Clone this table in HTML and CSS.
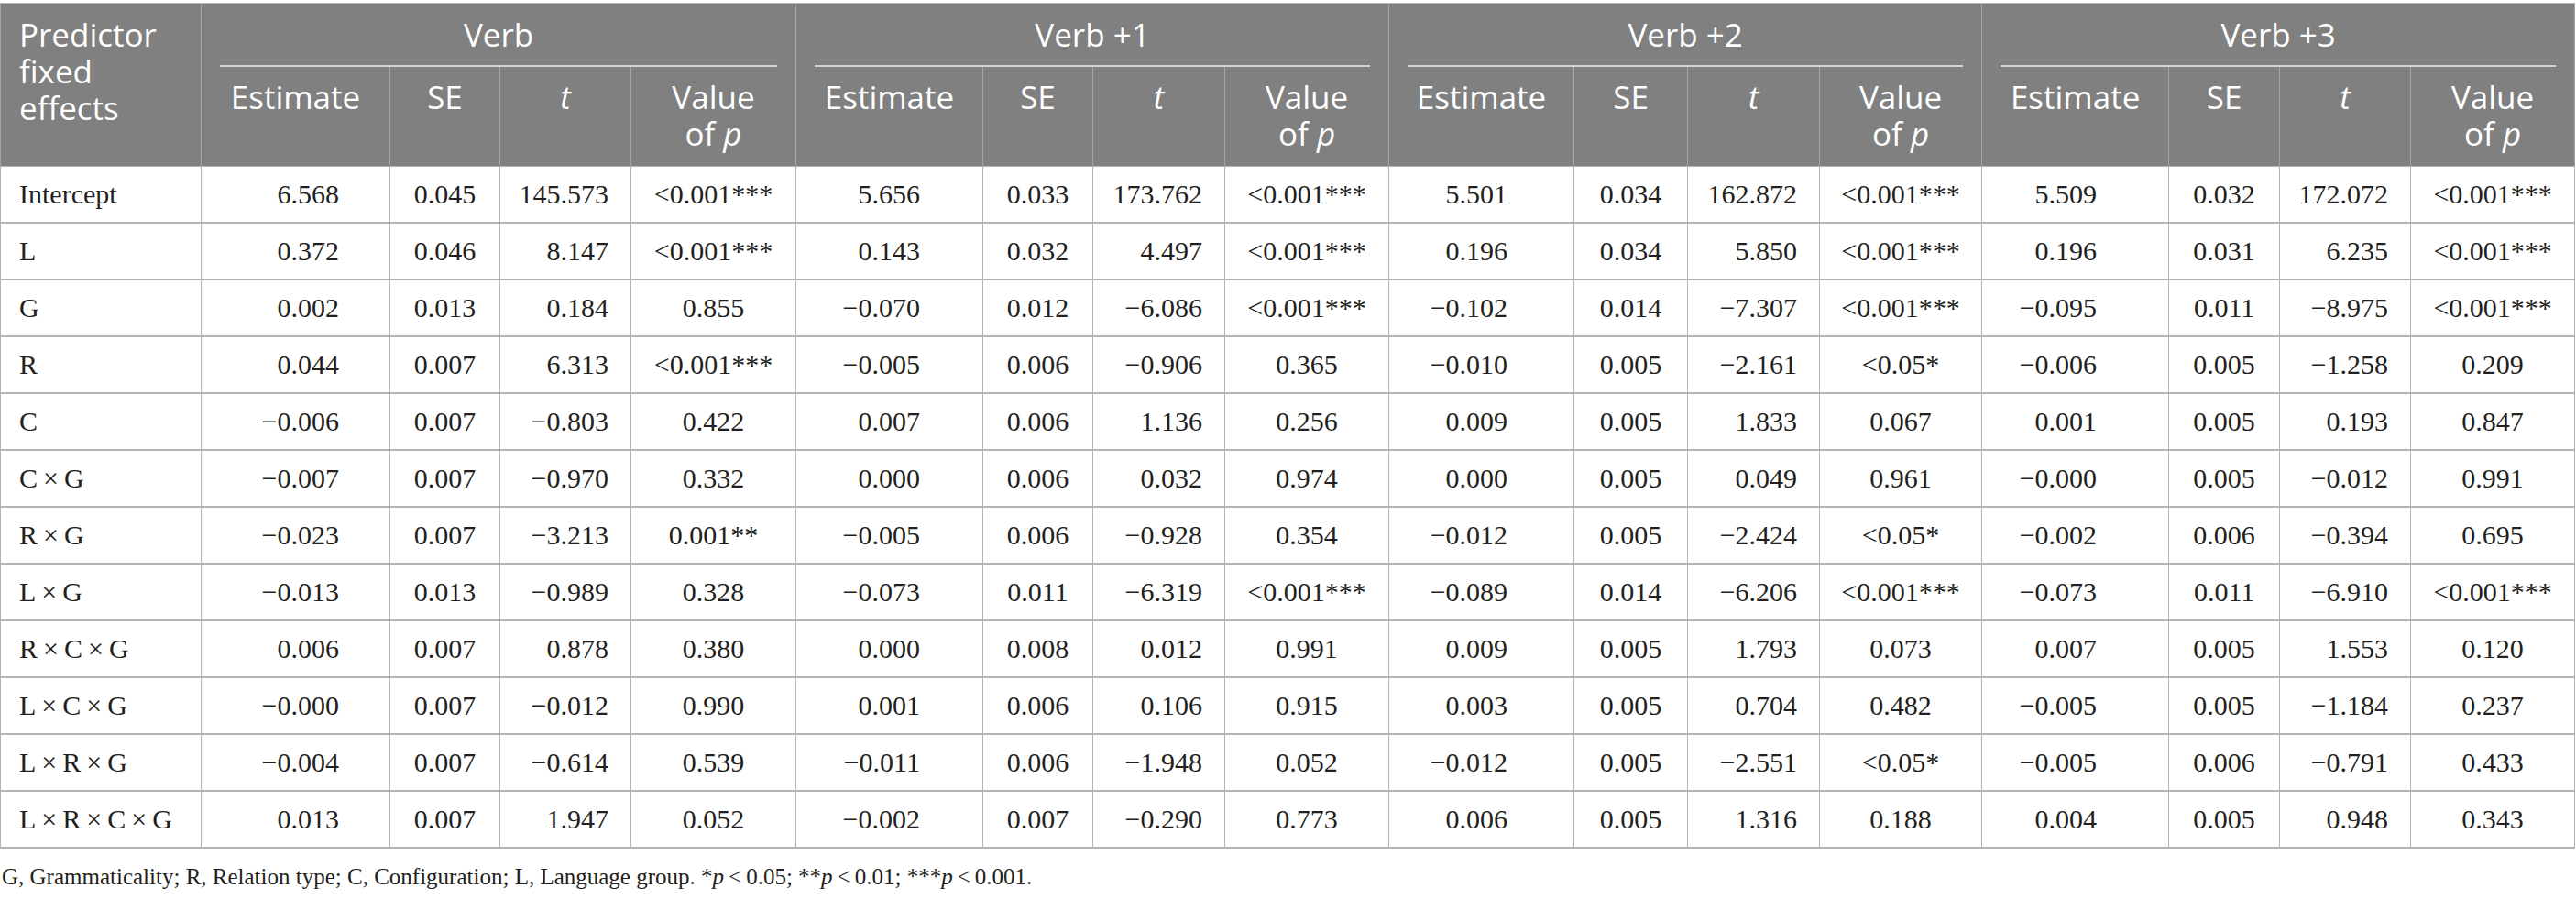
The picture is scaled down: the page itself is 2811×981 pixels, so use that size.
FILE: index.html
```html
<!DOCTYPE html>
<html lang="en">
  <head>
    <title>Predictor fixed effects</title>
    <link rel="stylesheet" href="styles.css">
  </head>
  <body>
    <div class="table-wrap">
      <table class="results">
        <colgroup>
          <col class="col-pred">
          <col class="col-est-a"><col class="col-se-a"><col class="col-t-a"><col class="col-p-a">
          <col class="col-est-b"><col class="col-se-b"><col class="col-t-b"><col class="col-p-b">
          <col class="col-est-c"><col class="col-se-c"><col class="col-t-c"><col class="col-p-c">
          <col class="col-est-d"><col class="col-se-d"><col class="col-t-d"><col class="col-p-d">
        </colgroup>
        <thead>
          <tr>
            <th rowspan="2" class="pred-head">Predictor fixed effects</th>
            <th colspan="4" class="group"><span class="group-label">Verb</span></th>
            <th colspan="4" class="group"><span class="group-label">Verb +1</span></th>
            <th colspan="4" class="group"><span class="group-label">Verb +2</span></th>
            <th colspan="4" class="group"><span class="group-label">Verb +3</span></th>
          </tr>
          <tr class="sub">
            <th>Estimate</th><th>SE</th><th><i>t</i></th><th><span class="line">Value</span><span class="line">of <i>p</i></span></th>
            <th>Estimate</th><th>SE</th><th><i>t</i></th><th><span class="line">Value</span><span class="line">of <i>p</i></span></th>
            <th>Estimate</th><th>SE</th><th><i>t</i></th><th><span class="line">Value</span><span class="line">of <i>p</i></span></th>
            <th>Estimate</th><th>SE</th><th><i>t</i></th><th><span class="line">Value</span><span class="line">of <i>p</i></span></th>
          </tr>
        </thead>
        <tbody id="rows"></tbody>
      </table>
    </div>
    <p class="note">G, Grammaticality; R, Relation type; C, Configuration; L, Language group. *<i>p</i>&thinsp;&lt;&thinsp;0.05; **<i>p</i>&thinsp;&lt;&thinsp;0.01; ***<i>p</i>&thinsp;&lt;&thinsp;0.001.</p>

    <script>
      const X = "\u2009\u00d7\u2009";
      const M = "\u2212";
      const data = [
        ["Intercept", "6.568", "0.045", "145.573", "<0.001***", "5.656", "0.033", "173.762", "<0.001***", "5.501", "0.034", "162.872", "<0.001***", "5.509", "0.032", "172.072", "<0.001***"],
        ["L", "0.372", "0.046", "8.147", "<0.001***", "0.143", "0.032", "4.497", "<0.001***", "0.196", "0.034", "5.850", "<0.001***", "0.196", "0.031", "6.235", "<0.001***"],
        ["G", "0.002", "0.013", "0.184", "0.855", "-0.070", "0.012", "-6.086", "<0.001***", "-0.102", "0.014", "-7.307", "<0.001***", "-0.095", "0.011", "-8.975", "<0.001***"],
        ["R", "0.044", "0.007", "6.313", "<0.001***", "-0.005", "0.006", "-0.906", "0.365", "-0.010", "0.005", "-2.161", "<0.05*", "-0.006", "0.005", "-1.258", "0.209"],
        ["C", "-0.006", "0.007", "-0.803", "0.422", "0.007", "0.006", "1.136", "0.256", "0.009", "0.005", "1.833", "0.067", "0.001", "0.005", "0.193", "0.847"],
        ["C×G", "-0.007", "0.007", "-0.970", "0.332", "0.000", "0.006", "0.032", "0.974", "0.000", "0.005", "0.049", "0.961", "-0.000", "0.005", "-0.012", "0.991"],
        ["R×G", "-0.023", "0.007", "-3.213", "0.001**", "-0.005", "0.006", "-0.928", "0.354", "-0.012", "0.005", "-2.424", "<0.05*", "-0.002", "0.006", "-0.394", "0.695"],
        ["L×G", "-0.013", "0.013", "-0.989", "0.328", "-0.073", "0.011", "-6.319", "<0.001***", "-0.089", "0.014", "-6.206", "<0.001***", "-0.073", "0.011", "-6.910", "<0.001***"],
        ["R×C×G", "0.006", "0.007", "0.878", "0.380", "0.000", "0.008", "0.012", "0.991", "0.009", "0.005", "1.793", "0.073", "0.007", "0.005", "1.553", "0.120"],
        ["L×C×G", "-0.000", "0.007", "-0.012", "0.990", "0.001", "0.006", "0.106", "0.915", "0.003", "0.005", "0.704", "0.482", "-0.005", "0.005", "-1.184", "0.237"],
        ["L×R×G", "-0.004", "0.007", "-0.614", "0.539", "-0.011", "0.006", "-1.948", "0.052", "-0.012", "0.005", "-2.551", "<0.05*", "-0.005", "0.006", "-0.791", "0.433"],
        ["L×R×C×G", "0.013", "0.007", "1.947", "0.052", "-0.002", "0.007", "-0.290", "0.773", "0.006", "0.005", "1.316", "0.188", "0.004", "0.005", "0.948", "0.343"]
      ];
      const kinds = ["est", "se", "t", "p"];
      const groups = ["a", "b", "c", "d"];

      const body = document.getElementById("rows");
      data.forEach(function (row) {
        const tr = document.createElement("tr");
        row.forEach(function (value, i) {
          const td = document.createElement("td");
          if (i === 0) {
            td.className = "pred";
            td.textContent = value.split("×").join(X);
          } else {
            const k = kinds[(i - 1) % 4];
            const g = groups[Math.floor((i - 1) / 4)];
            td.className = k + " " + k + "-" + g;
            td.textContent = value.replace("-", M);
          }
          tr.appendChild(td);
        });
        body.appendChild(tr);
      });
    </script>
  </body>
</html>
```

FILE: styles.css
```css
body {
  margin: 0;
  background-color: white;
  color: #231f20;
  font-family: "Liberation Serif", "Times New Roman", serif;
}
.table-wrap {
  padding-top: 3px;
}
.results {
  border-collapse: collapse;
  table-layout: fixed;
  width: 2809px;
  border: 1px solid #b5b5b5;
}
.col-pred { width: 219px; }
.col-est-a { width: 206px; }
.col-se-a { width: 120px; }
.col-t-a { width: 143px; }
.col-p-a { width: 180px; }
.col-est-b { width: 204px; }
.col-se-b { width: 120px; }
.col-t-b { width: 144px; }
.col-p-b { width: 179px; }
.col-est-c { width: 202px; }
.col-se-c { width: 124px; }
.col-t-c { width: 144px; }
.col-p-c { width: 177px; }
.col-est-d { width: 204px; }
.col-se-d { width: 121px; }
.col-t-d { width: 143px; }
.col-p-d { width: 179px; }

/* header */
.results th {
  background-color: #808080;
  color: white;
  font-family: "Open Sans", "Noto Sans", sans-serif;
  font-weight: normal;
  font-size: 35px;
  line-height: 40px;
  border-left: 1px solid #a6a6a6;
  border-right: 1px solid #a6a6a6;
  vertical-align: top;
}
.pred-head {
  text-align: left;
  padding: 14px 20px;
}
.group {
  padding: 14px 20px 0;
}
.group-label {
  display: block;
  padding-bottom: 13px;
  border-bottom: 2px solid #d4d4d4;
}
.sub th {
  padding: 13px 6px 15px;
}
.line {
  display: block;
  height: 40px;
}

/* body */
.results td {
  border: 1px solid #b5b5b5;
  border-width: 2px 1px;
  font-size: 30px;
  line-height: 40px;
  padding: 10px 0;
  white-space: nowrap;
}
.results tbody tr:first-child td {
  border-top-width: 1px;
}
.pred {
  text-align: left;
  padding-left: 20px !important;
}
.est {
  text-align: right;
}
.est-a { padding-right: 55px !important; }
.est-b { padding-right: 68px !important; }
.est-c { padding-right: 72px !important; }
.est-d { padding-right: 78px !important; }
.se,
.p {
  text-align: center;
}
.t {
  text-align: right;
  padding-right: 24px !important;
}
.note {
  margin: 16px 0 0 2px;
  font-size: 25px;
  line-height: 30px;
  color: #231f20;
}
```
